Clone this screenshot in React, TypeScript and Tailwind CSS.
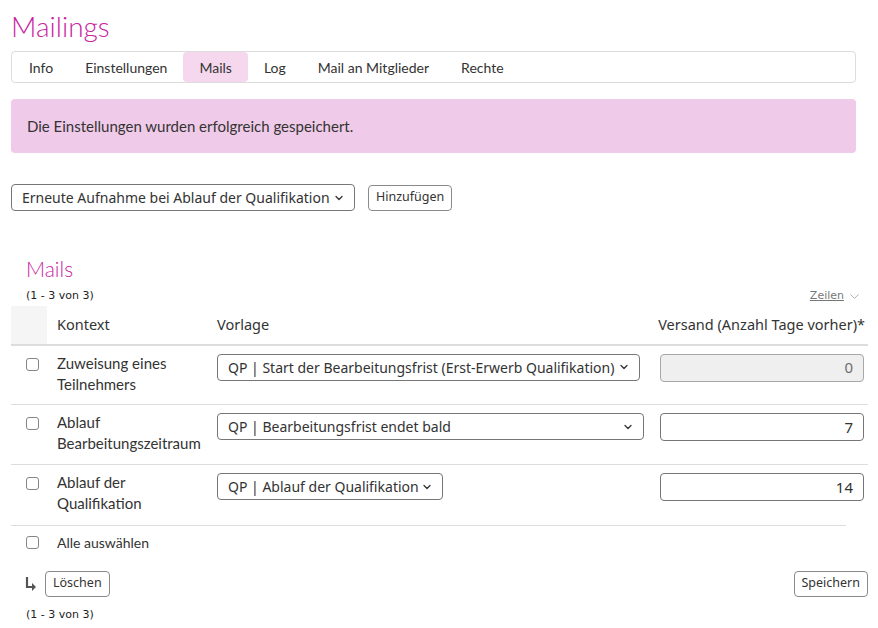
import { ChevronDown } from "lucide-react";

const tabs = ["Info", "Einstellungen", "Mails", "Log", "Mail an Mitglieder", "Rechte"] as const;

const rows = [
  {
    context: ["Zuweisung eines", "Teilnehmers"],
    template: "QP | Start der Bearbeitungsfrist (Erst-Erwerb Qualifikation)",
    selectWidth: "w-[423px]",
    days: "0",
    disabled: true,
  },
  {
    context: ["Ablauf", "Bearbeitungszeitraum"],
    template: "QP | Bearbeitungsfrist endet bald",
    selectWidth: "w-[427px]",
    days: "7",
    disabled: false,
  },
  {
    context: ["Ablauf der", "Qualifikation"],
    template: "QP | Ablauf der Qualifikation",
    selectWidth: "w-[226px]",
    days: "14",
    disabled: false,
  },
] as const;

const body = "font-['Lato',sans-serif]";
const ui = "font-['Noto_Sans','Open_Sans',sans-serif]";
const small = "font-['DejaVu_Sans',sans-serif]";

function FakeSelect({ label, width }: { label: string; width: string }) {
  return (
    <div
      className={`${width} ${ui} flex h-[27px] items-center justify-between rounded-[4px] border border-[#767676] bg-white pl-[10px] pr-[9px] text-[14px] text-[#333]`}
    >
      <span className="whitespace-nowrap">{label}</span>
      <ChevronDown size={12} strokeWidth={2.6} className="shrink-0 text-[#333]" />
    </div>
  );
}

function Check() {
  return <div className="h-[13px] w-[13px] rounded-[3px] border border-[#858585] bg-white" />;
}

function SmallButton({ children }: { children: string }) {
  return (
    <button className={`${ui} h-[26px] rounded-[4px] border border-[#8a8a8a] bg-white px-[7px] text-[12.5px] text-[#333]`}>
      {children}
    </button>
  );
}

export default function App() {
  return (
    <div className={`${body} min-h-[628px] overflow-hidden bg-white text-[#333]`}>
      <div className="pl-[11px] pr-[22px]">
        <h1 className="pt-[9px] text-[28px] font-light leading-[34px] text-[#c9259f]">Mailings</h1>

        <nav className="mt-[8px] flex h-[32px] items-center rounded-[4px] border border-[#dcdcdc] px-[1px]">
          {tabs.map((tab) => (
            <span
              key={tab}
              className={`flex h-[30px] items-center rounded-[4px] px-[16px] text-[14px] ${
                tab === "Mails" ? "bg-[#f5d8ee]" : ""
              }`}
            >
              {tab}
            </span>
          ))}
        </nav>

        <div className="mt-[16px] flex h-[54px] items-center rounded-[4px] bg-[#f0cbe9] px-[16px] text-[15px]">
          Die Einstellungen wurden erfolgreich gespeichert.
        </div>

        <div className="mt-[31px] flex items-center gap-[13px]">
          <FakeSelect label="Erneute Aufnahme bei Ablauf der Qualifikation" width="w-[344px]" />
          <SmallButton>Hinzufügen</SmallButton>
        </div>
      </div>

      <section className="ml-[11px] mt-[45px] w-[857px]">
        <h2 className="pl-[15px] text-[21px] font-light leading-[26px] text-[#c9259f]">Mails</h2>
        <div className="mt-[6px] flex items-center justify-between pl-[15px] pr-[6px]">
          <span className={`${small} text-[11px] text-[#222]`}>(1 - 3 von 3)</span>
          <span className={`${small} flex items-center gap-[3px] text-[11px] text-[#777]`}>
            <span className="underline">Zeilen</span>
            <ChevronDown size={15} strokeWidth={1.3} className="text-[#999]" />
          </span>
        </div>

        <table className="mt-[1px] w-full border-collapse">
          <thead>
            <tr className={`${ui} h-[39px] border-b-2 border-[#dddddd] text-[14.5px] text-[#333]`}>
              <th className="w-[36px] bg-[#f5f5f5]" />
              <th className="w-[160px] pl-[10px] text-left font-normal">Kontext</th>
              <th className="w-[443px] pl-[10px] text-left font-normal">Vorlage</th>
              <th className="pr-[3px] text-right font-normal">Versand (Anzahl Tage vorher)*</th>
            </tr>
          </thead>
          <tbody>
            {rows.map((row, i) => (
              <tr key={row.template} className={i < rows.length - 1 ? "border-b border-[#dddddd]" : ""}>
                <td className="h-[60px] pl-[15px] align-top">
                  <div className="pt-[12px]">
                    <Check />
                  </div>
                </td>
                <td className="pl-[10px] pt-[7px] align-top text-[15px] leading-[21px]">
                  <div>{row.context[0]}</div>
                  <div>{row.context[1]}</div>
                </td>
                <td className="pl-[10px] pt-[8px] align-top">
                  <FakeSelect label={row.template} width={row.selectWidth} />
                </td>
                <td className="pl-[10px] pt-[8px] align-top">
                  <div
                    className={`${ui} flex h-[28px] w-[204px] items-center justify-end rounded-[4px] border pr-[10px] text-[15px] ${
                      row.disabled ? "border-[#a8a8a8] bg-[#efefef] text-[#6d6d6d]" : "border-[#767676] bg-white text-[#333]"
                    }`}
                  >
                    {row.days}
                  </div>
                </td>
              </tr>
            ))}
          </tbody>
        </table>
        <div className="w-[835px] border-t border-[#dddddd]" />

        <div className="mt-[6px] flex items-center gap-[18px] pl-[15px]">
          <Check />
          <span className="text-[14px]">Alle auswählen</span>
        </div>

        <div className="mt-[18px] flex items-center justify-between">
          <div className="flex items-center gap-[8px] pl-[14px]">
            <svg width="12" height="16" viewBox="0 0 12 16" className="text-[#555]">
              <path d="M2 1v10h6" fill="none" stroke="currentColor" strokeWidth="2.2" />
              <path d="M7 7l4 4-4 4z" fill="currentColor" />
            </svg>
            <SmallButton>Löschen</SmallButton>
          </div>
          <SmallButton>Speichern</SmallButton>
        </div>

        <div className={`${small} mt-[10px] pl-[15px] text-[11px] text-[#222]`}>(1 - 3 von 3)</div>
      </section>
    </div>
  );
}
